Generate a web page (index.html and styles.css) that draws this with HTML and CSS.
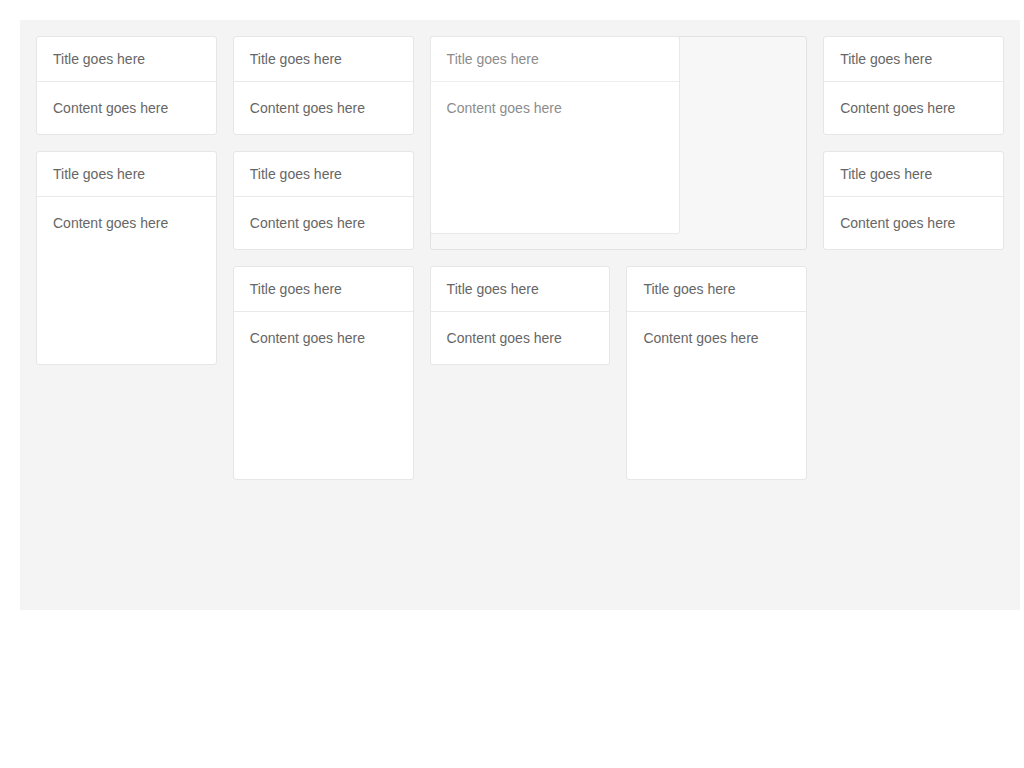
FILE: index.html
```html
<!DOCTYPE html>
<html>
<head>
<meta charset="utf-8">
<link rel="stylesheet" href="styles.css">
</head>
<body>
<div class="board">
  <div class="card c1 r1"><div class="card-title">Title goes here</div><div class="card-body">Content goes here</div></div>
  <div class="card c2 r1"><div class="card-title">Title goes here</div><div class="card-body">Content goes here</div></div>
  <div class="placeholder c3 r1">
    <div class="card dragging"><div class="card-title">Title goes here</div><div class="card-body">Content goes here</div></div>
  </div>
  <div class="card c5 r1"><div class="card-title">Title goes here</div><div class="card-body">Content goes here</div></div>
  <div class="card c1 r2 tall"><div class="card-title">Title goes here</div><div class="card-body">Content goes here</div></div>
  <div class="card c2 r2"><div class="card-title">Title goes here</div><div class="card-body">Content goes here</div></div>
  <div class="card c5 r2"><div class="card-title">Title goes here</div><div class="card-body">Content goes here</div></div>
  <div class="card c2 r3 tall"><div class="card-title">Title goes here</div><div class="card-body">Content goes here</div></div>
  <div class="card c3 r3"><div class="card-title">Title goes here</div><div class="card-body">Content goes here</div></div>
  <div class="card c4 r3 tall"><div class="card-title">Title goes here</div><div class="card-body">Content goes here</div></div>
</div>
</body>
</html>
```
FILE: styles.css
```css
html, body {
  margin: 0;
  padding: 0;
  background: #ffffff;
}
body {
  padding: 20px 4px 0 20px;
  font-family: "Liberation Sans", Arial, sans-serif;
  font-size: 14px;
  color: #666666;
}
.board {
  box-sizing: border-box;
  width: 1000px;
  height: 590px;
  background: #f4f4f4;
  padding: 16px;
  display: grid;
  grid-template-columns: repeat(5, 1fr);
  grid-auto-rows: 99px;
  gap: 16px;
  align-content: start;
}
.card {
  box-sizing: border-box;
  background: #ffffff;
  border: 1px solid #e6e6e6;
  border-radius: 3px;
  display: flex;
  flex-direction: column;
}
.card-title {
  height: 44px;
  line-height: 44px;
  padding: 0 16px;
  border-bottom: 1px solid #e9e9e9;
  white-space: nowrap;
}
.card-body {
  padding: 16px;
  line-height: 20px;
  white-space: nowrap;
}
.c1 { grid-column: 1; }
.c2 { grid-column: 2; }
.c3 { grid-column: 3; }
.c4 { grid-column: 4; }
.c5 { grid-column: 5; }
.r1 { grid-row: 1; }
.r2 { grid-row: 2; }
.r3 { grid-row: 3; }
.tall { grid-row-end: span 2; }
.placeholder {
  grid-column: 3 / span 2;
  grid-row: 1 / span 2;
  box-sizing: border-box;
  background: #f7f7f7;
  border: 1px solid #e2e2e2;
  border-radius: 3px;
  position: relative;
}
.dragging {
  position: absolute;
  left: -1px;
  top: -1px;
  width: 250px;
  height: 198px;
  color: #8c8c8c;
  border-color: #e8e8e8;
}
.dragging .card-title {
  border-bottom-color: #ededed;
}
```
